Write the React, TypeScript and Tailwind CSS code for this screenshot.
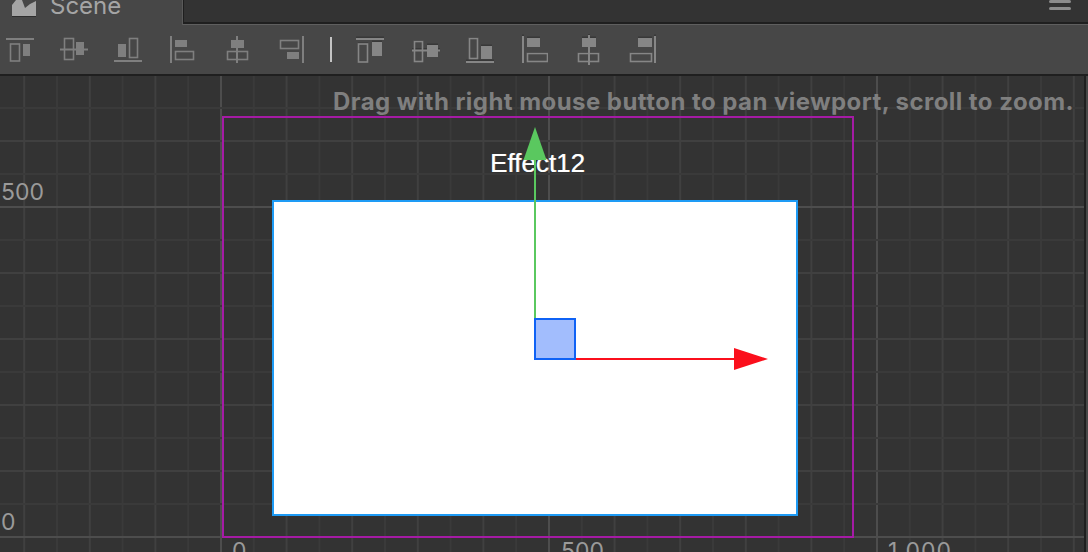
import React from "react";

const INK = "#7f7f7f";
const INK2 = "#868686";

type Shape = { x: number; y: number; w: number; h: number; solid?: boolean };
type IconDef = { origin: number; shapes: Shape[]; shadow?: boolean };

const icons1: IconDef[] = [
  { origin: 5, shapes: [{ x: 6, y: 38, w: 28, h: 2, solid: true }, { x: 10.5, y: 44, w: 9, h: 17 }, { x: 23, y: 44, w: 7, h: 12, solid: true }] },
  { origin: 59, shapes: [{ x: 60, y: 48.5, w: 28, h: 2, solid: true }, { x: 64.5, y: 38.5, w: 9, h: 21 }, { x: 76, y: 42, w: 8, h: 13, solid: true }] },
  { origin: 113, shapes: [{ x: 114, y: 60, w: 28, h: 2, solid: true }, { x: 118, y: 44, w: 8, h: 13, solid: true }, { x: 129.5, y: 38.5, w: 8, h: 19 }] },
  { origin: 167, shapes: [{ x: 170, y: 36, w: 2, h: 27, solid: true }, { x: 175, y: 40, w: 12, h: 7, solid: true }, { x: 175.5, y: 51.5, w: 18, h: 8 }] },
  { origin: 221, shapes: [{ x: 236, y: 36, w: 2, h: 27, solid: true }, { x: 231, y: 40, w: 13, h: 8, solid: true }, { x: 227.5, y: 51.5, w: 20, h: 8 }] },
  { origin: 275, shapes: [{ x: 302, y: 36, w: 2, h: 27, solid: true }, { x: 280.5, y: 40.5, w: 18, h: 8 }, { x: 287, y: 52, w: 12, h: 7, solid: true }] },
];

const icons2: IconDef[] = [
  { origin: 354, shapes: [{ x: 356, y: 38, w: 28, h: 2, solid: true }, { x: 358.5, y: 44, w: 9, h: 18 }, { x: 372, y: 42, w: 10, h: 14, solid: true }] },
  { origin: 408, shapes: [{ x: 412, y: 49.5, w: 28, h: 2, solid: true }, { x: 414.5, y: 41.5, w: 8, h: 20 }, { x: 427, y: 45, w: 11, h: 12, solid: true }] },
  { origin: 462, shapes: [{ x: 466, y: 61, w: 28, h: 2, solid: true }, { x: 469.5, y: 38.5, w: 8, h: 20 }, { x: 481, y: 46, w: 11, h: 13, solid: true }] },
  { origin: 516, shapes: [{ x: 522, y: 36, w: 2, h: 27, solid: true }, { x: 527, y: 38, w: 13, h: 9, solid: true }, { x: 527.5, y: 53.5, w: 20, h: 8 }] },
  { origin: 570, shapes: [{ x: 588, y: 35, w: 2, h: 30, solid: true }, { x: 582, y: 38, w: 14, h: 9, solid: true }, { x: 578.5, y: 53.5, w: 20, h: 8 }] },
  { origin: 624, shapes: [{ x: 654, y: 36, w: 2, h: 27, solid: true }, { x: 638, y: 38, w: 14, h: 9, solid: true }, { x: 630.5, y: 53.5, w: 21, h: 8 }] },
];

function AlignIcon({ def }: { def: IconDef }) {
  const color = def.shadow ? INK2 : INK;
  return (
    <svg width={32} height={32} viewBox={`${def.origin} 34 32 32`} className="shrink-0">
      {def.shadow &&
        def.shapes.map((s, i) => (
          <rect
            key={`s${i}`}
            x={s.x - (s.solid ? 0 : 0.5)}
            y={s.y - 1.5}
            width={s.w + (s.solid ? 0 : 1)}
            height={s.solid ? 2 : 1}
            fill="#383838"
          />
        ))}
      {def.shapes.map((s, i) =>
        s.solid ? (
          <rect key={i} x={s.x} y={s.y} width={s.w} height={s.h} fill={color} />
        ) : (
          <rect key={i} x={s.x} y={s.y} width={s.w} height={s.h} fill="none" stroke={color} strokeWidth={1.6} />
        )
      )}
    </svg>
  );
}

const W = 1084;
const H = 476;
const OY = 76;
const vMinor: number[] = [];
for (let i = -7; i < 27; i++) vMinor.push(221 + i * 32.8);
const hMinor: number[] = [];
for (let i = -1; i < 14; i++) hMinor.push(537 - OY - i * 33);

function lineColor(k: number) {
  if (k % 10 === 0) return "#4d4d4d";
  if (k % 2 === 0) return "#404040";
  return "#3a3a3a";
}

function Grid() {
  return (
    <svg width={W} height={H} className="block absolute left-0 top-0">
      {vMinor.map((x, i) => (
        <line key={`v${i}`} x1={x} x2={x} y1={0} y2={H} stroke={lineColor(i - 7)} strokeWidth={2} />
      ))}
      {hMinor.map((y, i) => (
        <line key={`h${i}`} x1={0} x2={W} y1={y} y2={y} stroke={lineColor(i - 1)} strokeWidth={2} />
      ))}
    </svg>
  );
}

function Gizmo() {
  return (
    <svg width={W} height={H} className="block absolute left-0 top-0 pointer-events-none">
      <rect x={534} y={160 - OY} width={2} height={160} fill="#5ac85f" />
      <path d={`M535 ${127 - OY} L523.5 ${160 - OY} L546.5 ${160 - OY} Z`} fill="#5ac85f" />
      <rect x={575} y={358 - OY} width={160} height={2} fill="#fb0f1c" />
      <path d={`M734 ${348 - OY} L768 ${359 - OY} L734 ${370 - OY} Z`} fill="#fb0f1c" />
      <rect x={535} y={319 - OY} width={40} height={40} fill="#a2bdfd" stroke="#0f62f5" strokeWidth={2} />
    </svg>
  );
}

export default function App() {
  return (
    <div
      className="w-[1088px] h-[552px] overflow-hidden flex flex-col bg-[#474747]"
      style={{ fontFamily: "Inter, 'Liberation Sans', sans-serif" }}
    >
      <div className="h-[25px] flex shrink-0 bg-[#333333]">
        <div className="w-[183px] h-[25px] bg-[#474747] flex items-start pl-[11px] overflow-hidden border-r border-[#5a5a5a]">
          <svg width={26} height={18} viewBox="0 0 26 18" className="shrink-0 mr-[13px]">
            <path d="M1 5 L5 0 L11 0 L14 8 L19 4 L25 1 L25 16 L1 16 Z" fill="#a5a5a5" />
            <rect x={1} y={16} width={24} height={1} fill="#2e2e2e" />
          </svg>
          <span className="text-[24px] leading-[24px] text-[#a5a5a5] mt-[-6px]">Scene</span>
        </div>
        <div className="flex-1 flex flex-col">
          <div className="flex-1 bg-[#333333] border-l border-[#1f1f1f] flex justify-end pr-[17px] overflow-hidden">
            <div className="w-[22px] flex flex-col gap-[4px]">
              <div className="h-[3px] bg-[#8c8c8c] rounded-full" />
              <div className="h-[3px] bg-[#8c8c8c] rounded-full" />
            </div>
          </div>
          <div className="h-[2px] bg-[#1f1f1f]" />
          <div className="h-[1px] bg-[#5f5f5f]" />
        </div>
      </div>

      <div className="h-[49px] shrink-0 bg-[#474747] flex items-center pl-[5px] gap-[22px]">
        {icons1.map((d) => (
          <AlignIcon key={d.origin} def={d} />
        ))}
        <div className="w-[2px] h-[25px] bg-[#c4c4c4] ml-[1px]" />
        {icons2.map((d) => (
          <AlignIcon key={d.origin} def={{ ...d, shadow: true }} />
        ))}
      </div>

      <div className="h-[2px] shrink-0 bg-[#1f1f1f]" />

      <div className="flex-1 flex overflow-hidden">
        <div className="relative flex-1 overflow-hidden bg-[#333333] border-r-2 border-[#1f1f1f]">
          <Grid />
          <span className="absolute left-[333px] top-[11px] text-[24px] leading-[30px] font-bold text-[#7f7f7f] whitespace-nowrap tracking-[0.45px]">
            Drag with right mouse button to pan viewport, scroll to zoom.
          </span>
          <span className="absolute left-[1px] top-[102px] text-[23px] leading-[28px] text-[#9a9a9a]">500</span>
          <span className="absolute left-[1px] top-[432px] text-[23px] leading-[28px] text-[#9a9a9a]">0</span>
          <span className="absolute left-[232px] top-[461px] text-[23px] leading-[28px] text-[#9a9a9a]">0</span>
          <span className="absolute left-[561px] top-[461px] text-[23px] leading-[28px] text-[#9a9a9a]">500</span>
          <span className="absolute left-[888px] top-[461px] text-[23px] leading-[28px] text-[#9a9a9a] tracking-[1px]">1,000</span>

          <div className="absolute left-[222px] top-[40px] w-[632px] h-[422px] border-2 border-[#a51ba5]" />
          <div className="absolute left-[272px] top-[124px] w-[526px] h-[316px] bg-white border-2 border-[#1e9bf5]" />
          <span
            className="absolute left-[490px] top-[72px] text-[26px] leading-[30px] text-white whitespace-nowrap [text-shadow:0.6px_0_0_rgba(255,255,255,0.6)]"
            style={{ fontFamily: "'Liberation Sans', Arial, sans-serif" }}
          >
            Effect12
          </span>
          <Gizmo />
        </div>
        <div className="w-[2px] shrink-0 bg-[#474747]" />
      </div>
    </div>
  );
}
